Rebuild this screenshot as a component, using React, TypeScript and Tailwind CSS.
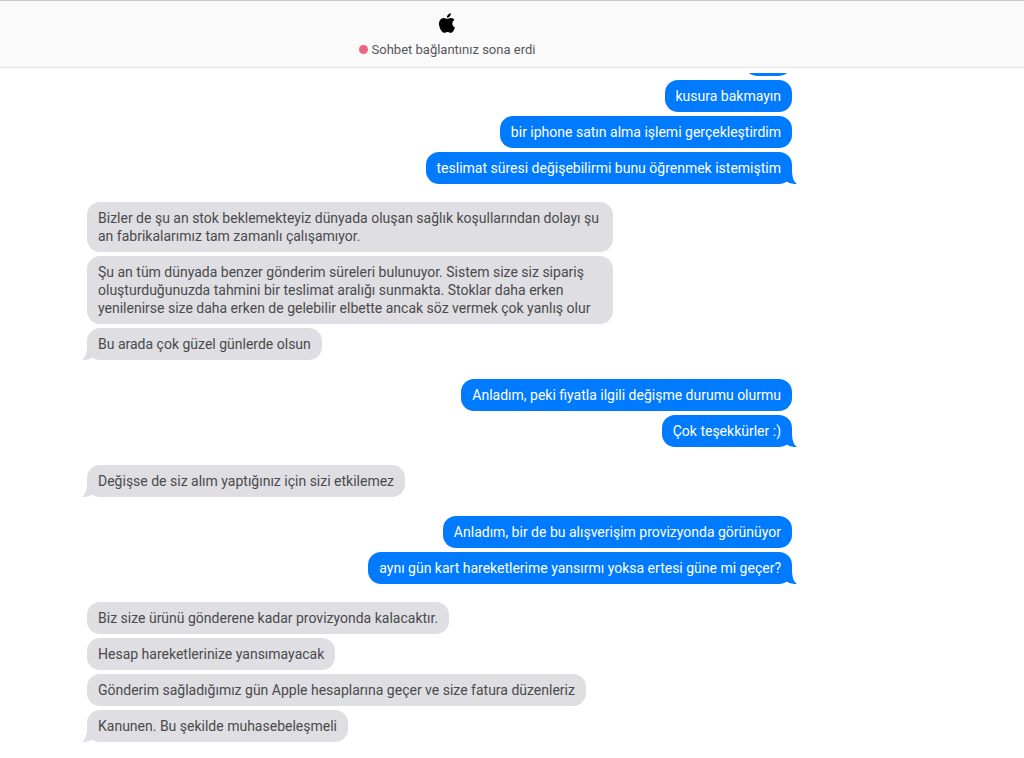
type Group = { from: "me" | "agent"; messages: string[] };

const groups: Group[] = [
  {
    from: "me",
    messages: [
      "",
      "kusura bakmayın",
      "bir iphone satın alma işlemi gerçekleştirdim",
      "teslimat süresi değişebilirmi bunu öğrenmek istemiştim",
    ],
  },
  {
    from: "agent",
    messages: [
      "Bizler de şu an stok beklemekteyiz dünyada oluşan sağlık koşullarından dolayı şu an fabrikalarımız tam zamanlı çalışamıyor.",
      "Şu an tüm dünyada benzer gönderim süreleri bulunuyor. Sistem size siz sipariş oluşturduğunuzda tahmini bir teslimat aralığı sunmakta. Stoklar daha erken yenilenirse size daha erken de gelebilir elbette ancak söz vermek çok yanlış olur",
      "Bu arada çok güzel günlerde olsun",
    ],
  },
  {
    from: "me",
    messages: ["Anladım, peki fiyatla ilgili değişme durumu olurmu", "Çok teşekkürler :)"],
  },
  { from: "agent", messages: ["Değişse de siz alım yaptığınız için sizi etkilemez"] },
  {
    from: "me",
    messages: [
      "Anladım, bir de bu alışverişim provizyonda görünüyor",
      "aynı gün kart hareketlerime yansırmı yoksa ertesi güne mi geçer?",
    ],
  },
  {
    from: "agent",
    messages: [
      "Biz size ürünü gönderene kadar provizyonda kalacaktır.",
      "Hesap hareketlerinize yansımayacak",
      "Gönderim sağladığımız gün Apple hesaplarına geçer ve size fatura düzenleriz",
      "Kanunen. Bu şekilde muhasebeleşmeli",
    ],
  },
];

function AppleLogo() {
  return (
    <svg viewBox="0 0 814 1000" className="h-5 w-4" role="img" aria-label="Apple">
      <path d="M788.1 340.9c-5.8 4.5-108.2 62.2-108.2 190.5 0 148.4 130.3 200.9 134.2 202.2-.6 3.2-20.7 71.9-68.7 141.9-42.8 61.6-87.5 123.1-155.5 123.1s-85.5-39.5-164-39.5c-76.5 0-103.7 40.8-165.9 40.8s-105.6-57-155.500-127C46.700 790.700 0 663 0 541.800c0-194.400 126.400-297.500 250.800-297.500 66.100 0 121.200 43.400 162.700 43.400 39.500 0 101.100-46 176.300-46 28.500 0 130.900 2.600 198.300 99.200zm-234-181.500c31.100-36.900 53.100-88.100 53.100-139.300 0-7.100-.6-14.300-1.900-20.100-50.600 1.900-110.800 33.700-147.100 75.800-28.500 32.400-55.100 83.600-55.100 135.500 0 7.800 1.300 15.600 1.900 18.100 3.200.6 8.400 1.300 13.600 1.300 45.400 0 102.500-30.400 135.500-71.300z" />
    </svg>
  );
}

function Tail({ mine }: { mine: boolean }) {
  return (
    <svg
      viewBox="0 0 17 15"
      aria-hidden="true"
      className={
        mine
          ? "absolute -right-[5px] bottom-0 h-[15px] w-[17px] fill-[#007aff]"
          : "absolute -left-[5px] bottom-0 h-[15px] w-[17px] -scale-x-100 fill-[#dfdee3]"
      }
    >
      <path d="M12 0 C12 7 13 12 17 15 C13 15 10 14.500 7.500 13 L3 10 L3 0 Z" />
    </svg>
  );
}

function Bubble({ text, mine, last }: { text: string; mine: boolean; last: boolean }) {
  return (
    <li
      className={
        mine
          ? "relative min-h-8 min-w-12 max-w-[526px] rounded-[13px] bg-[#007aff] px-[11px] py-[7px] text-white"
          : "relative min-h-8 max-w-[526px] rounded-[13px] bg-[#dfdee3] px-[11px] py-[7px] text-[#4a4a4c]"
      }
    >
      {text}
      {last && <Tail mine={mine} />}
    </li>
  );
}

export default function App() {
  return (
    <div className="min-h-screen bg-white font-['Roboto','Liberation_Sans',sans-serif]">
      <header className="flex flex-col items-center border-t border-b border-t-[#c8c8c8] border-b-[#e3e3e5] bg-[#fafafa] pt-3 pr-[130px] pb-[9px]">
        <AppleLogo />
        <p className="mt-2 flex items-center gap-1 text-[13px] leading-[17px] text-[#57575a]">
          <span className="size-[9px] rounded-full bg-[#ee6384]" />
          Sohbet bağlantınız sona erdi
        </p>
      </header>
      <main className="mt-[5px] mr-[227px] ml-[82px] overflow-hidden px-[5px] pb-[15px]">
        <div className="-mt-12 flex flex-col text-[14px] leading-[18px]">
          {groups.map((group, g) => (
            <ul
              key={g}
              className={
                group.from === "me"
                  ? "mt-[19px] flex flex-col items-end gap-1"
                  : "mt-[18px] flex flex-col items-start gap-1"
              }
            >
              {group.messages.map((text, i) => (
                <Bubble
                  key={i}
                  text={text}
                  mine={group.from === "me"}
                  last={i === group.messages.length - 1}
                />
              ))}
            </ul>
          ))}
        </div>
      </main>
    </div>
  );
}
